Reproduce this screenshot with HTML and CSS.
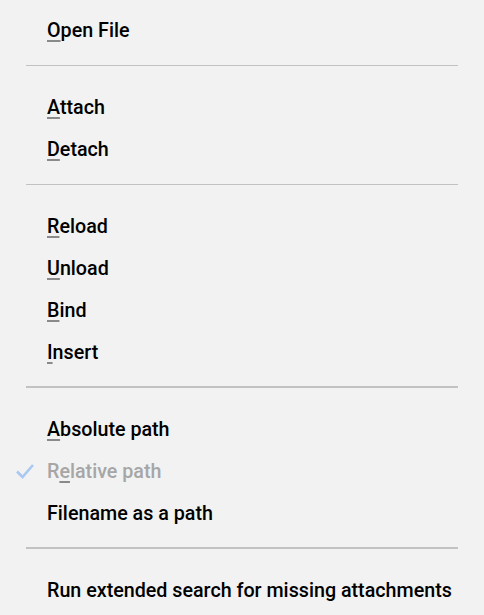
FILE: index.html
```
<!DOCTYPE html>
<html>
<head>
<meta charset="utf-8">
<link rel="stylesheet" href="styles.css">
</head>
<body>
<div class="menu">
  <div class="item"><span class="mn">O</span>pen File</div>
  <div class="sep"></div>
  <div class="item"><span class="mn">A</span>ttach</div>
  <div class="item"><span class="mn">D</span>etach</div>
  <div class="sep"></div>
  <div class="item"><span class="mn">R</span>eload</div>
  <div class="item"><span class="mn">U</span>nload</div>
  <div class="item"><span class="mn">B</span>ind</div>
  <div class="item"><span class="mn">I</span>nsert</div>
  <div class="sep thick"></div>
  <div class="item"><span class="mn">A</span>bsolute path</div>
  <div class="item disabled"><svg class="check" width="20" height="16" viewBox="0 0 20 16"><path d="M2 8.5 L7.5 14 L18 2" fill="none" stroke="#a9c9f3" stroke-width="2.6"/></svg>R<span class="mn">e</span>lative path</div>
  <div class="item">Filename as a path</div>
  <div class="sep thick"></div>
  <div class="item">Run extended search for missing attachments</div>
</div>
</body>
</html>
```
FILE: styles.css
```
html, body {
  margin: 0;
  padding: 0;
  background: #f2f2f2;
}
.menu {
  display: flex;
  flex-direction: column;
  padding-top: 9px;
  font-family: Roboto, "Liberation Sans", sans-serif;
  font-weight: 500;
  font-size: 19.7px;
  color: #000;
}
.item {
  position: relative;
  box-sizing: border-box;
  height: 42px;
  padding-top: 2px;
  line-height: 40px;
  padding-left: 47px;
  white-space: nowrap;
}
.mn {
  text-decoration: underline;
  text-decoration-color: #8a8a8a;
  text-decoration-thickness: 1.5px;
  text-underline-offset: 3px;
}
.disabled {
  color: #a6a6a6;
}
.check {
  position: absolute;
  left: 15px;
  top: 13px;
}
.sep {
  height: 35px;
  margin: 0 26px;
  background: linear-gradient(#c2c2c2, #c2c2c2) 0 14px / 100% 1px no-repeat;
}
.sep.thick {
  background: linear-gradient(#c2c2c2, #c2c2c2) 0 13px / 100% 2px no-repeat;
}
```
